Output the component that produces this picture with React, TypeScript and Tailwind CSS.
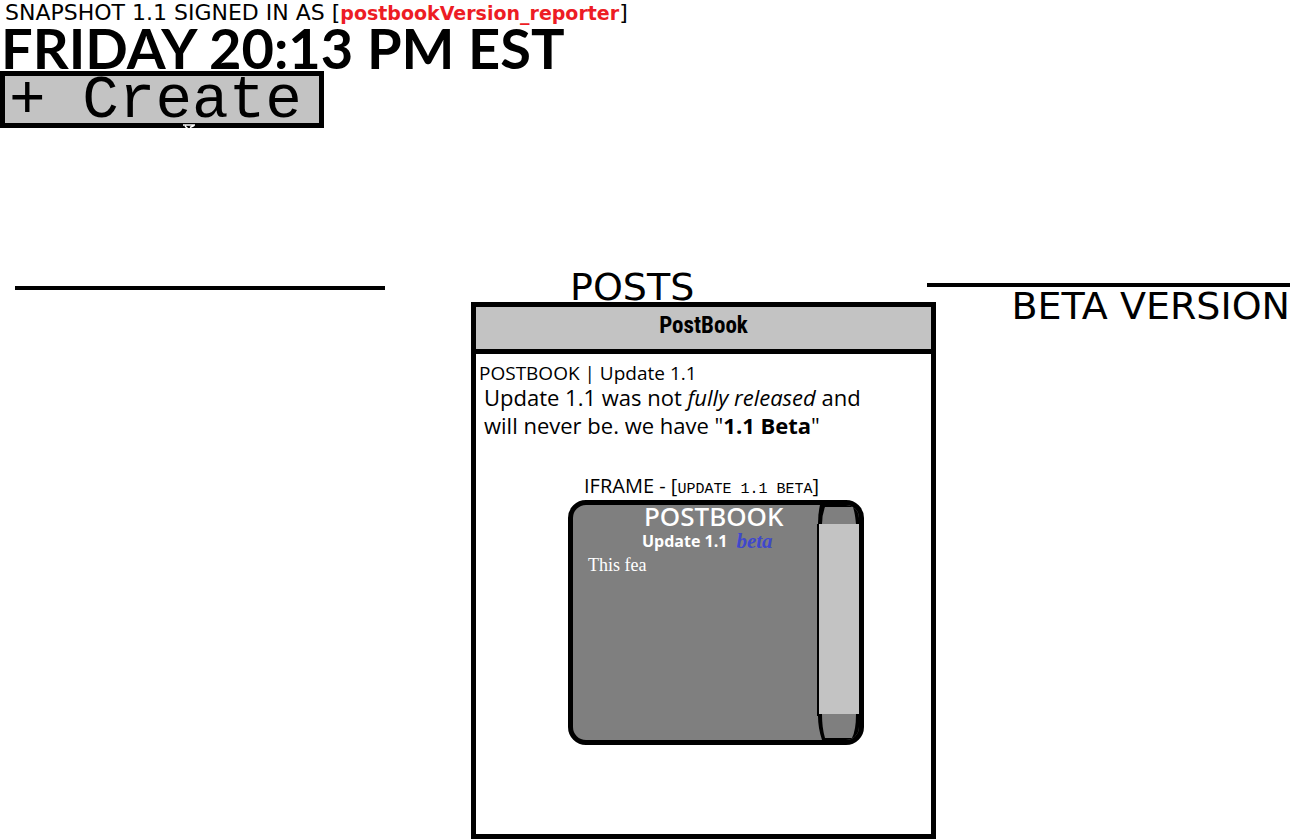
function TopBar() {
  return (
    <header className="flex flex-col items-start">
      <p className="pl-[5px] pt-[2px] font-['DejaVu_Sans',sans-serif] text-[22px] leading-[22px] whitespace-nowrap">
        SNAPSHOT 1.1 SIGNED IN AS [
        <span className="text-[19px] font-bold text-[#ed1c24]">postbookVersion_reporter</span>]
      </p>
      <p className="pl-px font-['Lato',sans-serif] text-[56px] leading-[47px] font-bold whitespace-nowrap">
        FRIDAY 20:13 PM EST
      </p>
      <button
        type="button"
        className="relative flex h-[57px] w-[324px] items-center border-5 border-black bg-[#c3c3c3] pt-[2px] pl-1 font-['Liberation_Mono',monospace] text-[61px] leading-[47px] whitespace-pre"
      >
        + Create
        <svg className="absolute -bottom-[6px] left-[178px]" width="13" height="5" viewBox="0 0 13 5" aria-hidden="true">
          <path d="M0 1h12M2 2l3 3M11 1.5l-4 2" fill="none" stroke="#fff" strokeWidth="1.5" />
        </svg>
      </button>
    </header>
  );
}

function ScrollBar() {
  return (
    <div className="flex w-[42px] flex-col overflow-hidden rounded-r-[13px]" aria-hidden="true">
      <svg className="h-[19px] w-full" viewBox="0 0 42 19" preserveAspectRatio="none">
        <path d="M3 0H42V19H1Q1 8 3 0Z" fill="#000" />
        <path d="M8 2H36Q38 8 39 19H5Q5 10 8 2Z" fill="#7f7f7f" />
      </svg>
      <div className="flex-1 border-l-2 border-black bg-[#c3c3c3]" />
      <svg className="h-[26px] w-full" viewBox="0 0 42 26" preserveAspectRatio="none">
        <path d="M0 0H42V26H5Q1 14 1 2L0 2Z" fill="#000" />
        <path d="M5 0H39Q39 16 35 24H8Q5 14 5 0Z" fill="#7f7f7f" />
      </svg>
    </div>
  );
}

function EmbeddedFrame() {
  return (
    <section className="ml-[92px] w-[296px]">
      <h3 className="h-7 pl-4 font-['Open_Sans',sans-serif] text-[20px] leading-7 whitespace-nowrap">
        IFRAME - [<span className="font-['Liberation_Mono',monospace] text-[15px]">UPDATE 1.1 BETA</span>]
      </h3>
      <div className="flex h-[245px] rounded-[18px] border-5 border-black bg-[#7f7f7f] text-white">
        <div className="flex-1 whitespace-nowrap">
          <h4 className="pl-[71px] font-['Noto_Sans',sans-serif] text-[26px] leading-[22px] font-medium">POSTBOOK</h4>
          <p className="flex gap-[9px] pl-[69px] font-['Open_Sans',sans-serif] text-[16px] leading-[28px] font-bold">
            Update 1.1
            <em className="font-['Liberation_Serif',serif] text-[21px] text-[#3f48cc]">beta</em>
          </p>
          <p className="pl-[15px] font-['Liberation_Serif',serif] text-[18px] leading-[20px]">This fea</p>
        </div>
        <ScrollBar />
      </div>
    </section>
  );
}

function PostCard() {
  return (
    <article className="h-[537px] border-5 border-black bg-white">
      <h2 className="h-[47px] border-b-5 border-black bg-[#c3c3c3] text-center font-['Liberation_Sans_Narrow','Roboto_Condensed','DejaVu_Sans_Condensed',sans-serif] text-[23px] leading-[38px] font-bold">
        PostBook
      </h2>
      <h3 className="pt-[9px] pl-[3px] font-['Open_Sans',sans-serif] text-[19px] leading-5 font-normal">
        POSTBOOK | Update 1.1
      </h3>
      <p className="pl-2 font-['Open_Sans',sans-serif] text-[22px] leading-[28px] whitespace-nowrap">
        Update 1.1 was not <em>fully released</em> and
        <br />
        will never be. we have "<strong>1.1 Beta</strong>"
      </p>
      <div className="h-[33px]" />
      <EmbeddedFrame />
    </article>
  );
}

export default function App() {
  return (
    <div className="min-h-screen overflow-x-hidden bg-white text-black">
      <TopBar />
      <main className="grid grid-cols-[471fr_465px_354fr] pt-[130px]">
        <div className="pt-7 pr-[86px] pl-[15px]">
          <hr className="border-0 border-t-4 border-black" />
        </div>
        <section>
          <h1 className="pt-[14px] pl-[99px] font-['DejaVu_Sans',sans-serif] text-[38px] leading-[30px]">POSTS</h1>
          <PostCard />
        </section>
        <aside className="pt-[25px]">
          <hr className="-ml-[9px] border-0 border-t-4 border-black" />
          <p className="text-right font-['DejaVu_Sans',sans-serif] text-[38px] leading-[38px] whitespace-nowrap">
            BETA VERSION
          </p>
        </aside>
      </main>
    </div>
  );
}
